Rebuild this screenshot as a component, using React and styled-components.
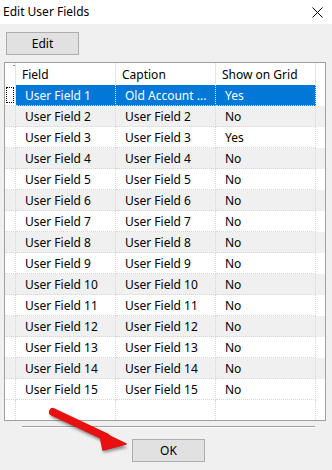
import React from "react";
import styled, { createGlobalStyle } from "styled-components";

const Global = createGlobalStyle`
  html, body { margin: 0; padding: 0; background: #f0f0f0; }
  body { font-family: "Noto Sans", "Segoe UI", sans-serif; font-size: 12px; color: #000; }
`;

const Window = styled.div`
  position: relative;
  width: 332px;
  height: 470px;
  background: #f0f0f0;
  display: flex;
  flex-direction: column;
  overflow: hidden;
`;

const TitleBar = styled.div`
  height: 24px;
  background: #fff;
  display: flex;
  align-items: center;
  justify-content: space-between;
  padding: 0 9px 0 3px;
  box-sizing: border-box;
`;

const Title = styled.span`
  font-size: 12px;
  line-height: 24px;
`;

const Toolbar = styled.div`
  display: flex;
  padding: 8px 0 0 6px;
  height: 23px;
`;

const Button = styled.button`
  width: 73px;
  height: 23px;
  box-sizing: border-box;
  border: 1px solid #adadad;
  background: #e1e1e1;
  font-family: "Noto Sans", sans-serif;
  font-size: 12px;
  color: #000;
  padding: 0;
  margin: 0;
`;

const Grid = styled.div`
  margin: 7px 6px 0 4px;
  height: 359px;
  box-sizing: border-box;
  border: 1px solid #a0a0a0;
  background: #fff;
  display: flex;
  flex-direction: column;
`;

const Row = styled.div`
  display: grid;
  grid-template-columns: 11px 100px 100px 100px;
  height: ${(p) => p.$h}px;
  flex: ${(p) => (p.$fill ? 1 : "none")};
  background: ${(p) => (p.$alt ? "#f0f0f0" : "#fff")};
`;

const HeadCell = styled.div`
  box-sizing: border-box;
  border-right: 1px solid #e5e5e5;
  padding-left: 6px;
  display: flex;
  align-items: center;
  white-space: nowrap;
  overflow: hidden;
  position: relative;
`;

const Cell = styled.div`
  box-sizing: border-box;
  border-right: 1px dotted ${(p) => (p.$sel ? "#cfe3f7" : "#d6d6d6")};
  border-bottom: ${(p) => (p.$nobottom ? "none" : "1px dotted #d6d6d6")};
  padding-left: 9px;
  display: flex;
  align-items: center;
  background: ${(p) => (p.$sel ? "#0078d7" : "transparent")};
  color: ${(p) => (p.$sel ? "#fff" : "#000")};
  white-space: nowrap;
  overflow: hidden;
`;

const Text = styled.span`
  white-space: nowrap;
`;

const RowHead = styled.div`
  box-sizing: border-box;
  border-right: 1px dotted #d6d6d6;
  border-bottom: ${(p) => (p.$nobottom ? "none" : "1px dotted #d6d6d6")};
  padding: 2px 0 2px 1px;
  display: flex;
`;

const Focus = styled.div`
  width: 8px;
  box-sizing: border-box;
  border: 1px dotted #000;
`;

const SortMark = styled.div`
  position: absolute;
  right: 0;
  top: 2px;
  width: 2px;
  height: 1px;
  background: #888;
`;

const Footer = styled.div`
  display: flex;
  flex-direction: column;
  align-items: center;
  padding-top: 5px;
`;

const Separator = styled.div`
  width: 293px;
  margin-left: 4px;
  height: 1px;
  background: #a0a0a0;
  border-bottom: 1px solid #fff;
`;

const OkRow = styled.div`
  display: flex;
  justify-content: center;
  padding: 11px 0 0 5px;
`;

const ArrowSvg = styled.svg`
  position: absolute;
  left: 40px;
  top: 400px;
  overflow: visible;
`;

const rows = Array.from({ length: 15 }, (_, i) => ({
  field: `User Field ${i + 1}`,
  caption: i === 0 ? "Old Account ..." : `User Field ${i + 1}`,
  show: i === 0 || i === 2 ? "Yes" : "No",
}));

export default function App() {
  return (
    <>
      <Global />
      <Window>
        <TitleBar>
          <Title>Edit User Fields</Title>
          <svg width="11" height="11" viewBox="0 0 11 11">
            <path d="M0.5 0.5 L10.5 10.5 M10.5 0.5 L0.5 10.5" stroke="#000" strokeWidth="1" />
          </svg>
        </TitleBar>
        <Toolbar>
          <Button>Edit</Button>
        </Toolbar>
        <Grid>
          <Row $h={22}>
            <HeadCell>
              <SortMark />
            </HeadCell>
            <HeadCell>Field</HeadCell>
            <HeadCell>Caption</HeadCell>
            <HeadCell>Show on Grid</HeadCell>
          </Row>
          {rows.map((r, i) => {
            const sel = i === 0;
            return (
              <Row key={i} $h={21} $alt={i % 2 === 1}>
                <RowHead>{sel && <Focus />}</RowHead>
                <Cell $sel={sel}><Text>{r.field}</Text></Cell>
                <Cell $sel={sel}><Text>{r.caption}</Text></Cell>
                <Cell $sel={sel}><Text>{r.show}</Text></Cell>
              </Row>
            );
          })}
          <Row $fill>
            <RowHead $nobottom />
            <Cell $nobottom />
            <Cell $nobottom />
            <Cell $nobottom />
          </Row>
        </Grid>
        <Footer>
          <Separator />
        </Footer>
        <OkRow>
          <Button>OK</Button>
        </OkRow>
        <ArrowSvg width="100" height="60" viewBox="0 0 100 60">
          <defs>
            <filter id="sh" x="-20%" y="-20%" width="140%" height="160%">
              <feGaussianBlur stdDeviation="1.6" />
            </filter>
          </defs>
          <g transform="translate(1.5,2.5)" filter="url(#sh)" opacity="0.55">
            <path d="M13 12 L66 37" stroke="#333" strokeWidth="8" strokeLinecap="round" />
            <path d="M60 32 L86 45 L62 50 Z" fill="#333" />
          </g>
          <path d="M13 12 L66 37" stroke="#e81010" strokeWidth="8" strokeLinecap="round" />
          <path d="M59 31 L86 44 L63 50 Z" fill="#e81010" stroke="#e81010" strokeWidth="1.5" strokeLinejoin="round" />
        </ArrowSvg>
      </Window>
    </>
  );
}
